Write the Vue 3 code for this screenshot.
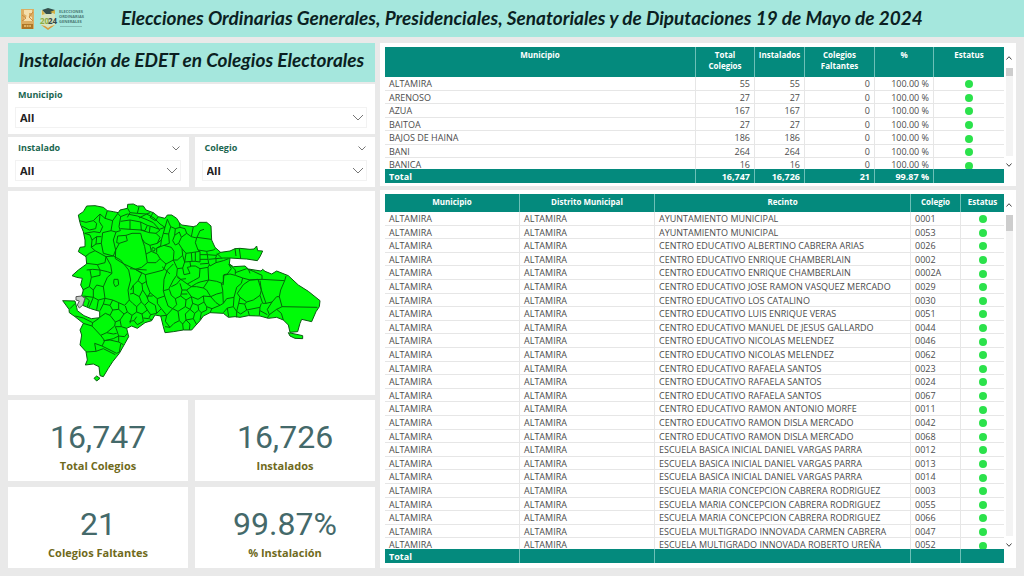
<script setup>
const municipios = [
  ['ALTAMIRA', '55', '55'],
  ['ARENOSO', '27', '27'],
  ['AZUA', '167', '167'],
  ['BAITOA', '27', '27'],
  ['BAJOS DE HAINA', '186', '186'],
  ['BANI', '264', '264'],
  ['BANICA', '16', '16'],
]

const recintos = [
  ['AYUNTAMIENTO MUNICIPAL', '0001'],
  ['AYUNTAMIENTO MUNICIPAL', '0053'],
  ['CENTRO EDUCATIVO ALBERTINO CABRERA ARIAS', '0026'],
  ['CENTRO EDUCATIVO ENRIQUE CHAMBERLAIN', '0002'],
  ['CENTRO EDUCATIVO ENRIQUE CHAMBERLAIN', '0002A'],
  ['CENTRO EDUCATIVO JOSE RAMON VASQUEZ MERCADO', '0029'],
  ['CENTRO EDUCATIVO LOS CATALINO', '0030'],
  ['CENTRO EDUCATIVO LUIS ENRIQUE VERAS', '0051'],
  ['CENTRO EDUCATIVO MANUEL DE JESUS GALLARDO', '0044'],
  ['CENTRO EDUCATIVO NICOLAS MELENDEZ', '0046'],
  ['CENTRO EDUCATIVO NICOLAS MELENDEZ', '0062'],
  ['CENTRO EDUCATIVO RAFAELA SANTOS', '0023'],
  ['CENTRO EDUCATIVO RAFAELA SANTOS', '0024'],
  ['CENTRO EDUCATIVO RAFAELA SANTOS', '0067'],
  ['CENTRO EDUCATIVO RAMON ANTONIO MORFE', '0011'],
  ['CENTRO EDUCATIVO RAMON DISLA MERCADO', '0042'],
  ['CENTRO EDUCATIVO RAMON DISLA MERCADO', '0068'],
  ['ESCUELA BASICA INICIAL DANIEL VARGAS PARRA', '0012'],
  ['ESCUELA BASICA INICIAL DANIEL VARGAS PARRA', '0013'],
  ['ESCUELA BASICA INICIAL DANIEL VARGAS PARRA', '0014'],
  ['ESCUELA MARIA CONCEPCION CABRERA RODRIGUEZ', '0003'],
  ['ESCUELA MARIA CONCEPCION CABRERA RODRIGUEZ', '0055'],
  ['ESCUELA MARIA CONCEPCION CABRERA RODRIGUEZ', '0066'],
  ['ESCUELA MULTIGRADO INNOVADA CARMEN CABRERA', '0047'],
  ['ESCUELA MULTIGRADO INNOVADA ROBERTO UREÑA', '0052'],
]

const cards = [
  ['16,747', 'Total Colegios'],
  ['16,726', 'Instalados'],
  ['21', 'Colegios Faltantes'],
  ['99.87%', '% Instalación'],
]

const slicers = [
  { id: 'municipio', label: 'Municipio', wide: true },
  { id: 'instalado', label: 'Instalado' },
  { id: 'colegio', label: 'Colegio' },
]

// Municipal boundaries inside the country outline
const borders = [
  'M88 92L108 97 130 92 140 100 137 116 118 120 95 108',
  'M172 62L165 85 150 72 148 95 158 110 150 128 132 125 104 130',
  'M165 85L188 92 205 68M188 92L183 122 158 128M205 72L212 80 207 110 211 122 198 126 183 122',
  'M212 80L232 72 262 78 288 88 310 98 328 118 345 112 352 88',
  'M233 55L240 68 262 70 267 50M262 70L290 72 300 68M240 68L232 82M267 84L290 72 312 84 330 102 345 112',
  'M212 94L240 90 272 96 274 120 240 118 211 116M240 90L240 118M272 96L292 106 285 122 274 120M292 106L312 112 328 118',
  'M158 128L154 160 160 190 190 198 197 180 190 150 198 126',
  'M190 198L168 200 135 182 118 190 106 200M168 200L165 218 142 224 110 220M135 182L124 172 126 150 120 135 104 130',
  'M126 150L140 140 154 140M124 172L138 162 154 160M140 140L138 162',
  'M200 158L203 138 228 136 232 152 208 160ZM228 136L246 130 272 130 276 146 284 170 288 192 292 218 275 232 256 238 222 222 196 206 197 180 208 160',
  'M190 198L212 210 236 240 242 270 234 300 238 330 224 346 206 338 188 330 165 325 160 290 172 262 186 250 182 225 168 200',
  'M192 268L204 268 206 284 196 290 191 280Z',
  'M142 224L150 240 172 245 186 250M110 240L128 238 150 240M120 240L124 262 118 290 98 300M150 240L150 256 124 262M160 290L140 285 130 300 118 290M130 300L130 322 100 318M165 325L145 330 130 322',
  'M272 120L298 128 318 130 330 142 322 160 300 166 284 158 276 146M298 128L300 110M318 130L330 120',
  'M300 166L304 184 288 192M304 184L322 192 330 206 318 218 292 218M308 172L316 176 312 184 305 178Z',
  'M322 160L334 150 332 168 320 174 320 188M320 174L342 166 364 172 372 184 370 210 348 222 330 206',
  'M348 222L340 240 318 246 286 254 256 238 275 250 264 272 250 286 242 300',
  'M370 210L382 236 380 256 370 270 356 298 340 302 344 318 322 326 300 308 290 282 286 254M370 222L352 240 342 268 340 302',
  'M345 112L340 130 334 150M340 130L356 132 362 110 376 116 390 112 388 98M356 132L358 160 342 166M362 110L352 88',
  'M388 126L394 142 386 160 376 165 368 152 374 136ZM376 116L374 136M394 142L410 130 424 140 430 110M410 130L405 116 390 112',
  'M386 160L396 176 398 196 382 210 370 210M396 176L408 190 404 216 398 196M408 190L424 188 436 186 450 184M424 188L426 214 404 216M436 186L436 214 426 214M450 184L450 216 436 214',
  'M424 140L440 144 436 158 444 180 450 184M440 144L450 122 462 118M440 142L484 148M444 180L470 184 490 180 496 176',
  'M450 194L472 194 474 208 450 208M470 184L472 194M472 194L498 196 512 187M474 208L476 220 450 222M476 208L496 206 500 196M496 206L520 204 540 204',
  'M498 218L520 212 536 206M498 206L498 218 480 228 476 220',
  'M382 236L398 234 404 216M398 234L402 254 420 250 412 232 422 230 420 216M420 228L436 228 450 236 448 262 430 272 412 282 398 272 382 262',
  'M380 256L392 268 380 282 364 290M392 268L408 266M412 282L424 290 440 280 450 276M450 236L474 232 476 270 450 276',
  'M474 232L478 224M476 270L500 274 516 280 520 276 522 254 532 252 544 236 536 222',
  'M514 280L520 284 520 256 540 252 556 256 578 264 574 280 560 292 552 322 530 326 520 340 518 300Z',
  'M538 222L556 240 556 254M556 248L590 236 610 244 636 256 636 268 600 270 578 264M595 237L600 250',
  'M600 270L624 268 634 300 630 316 610 330 590 336 570 322 562 310 580 284Z',
  'M636 268L704 272 708 258M704 272L692 300 688 320 696 350M630 272L634 300 648 340 638 340 630 316M648 340L666 336 680 320 688 320',
  'M696 350L802 352M696 350L680 358 658 374 652 384M658 374L652 358 666 336M680 358L694 370 700 390',
  'M570 322L566 340 584 342 590 336M566 340L560 364 572 372 590 360 584 342M590 360L630 352 634 340M630 352L628 376M594 362L598 376',
  'M552 322L550 350 560 364M550 350L532 354 520 368M532 354L536 380M560 364L560 382M630 362L652 374',
  'M476 270L460 294 440 290 424 290 410 300 424 320 444 328 460 318 482 320 470 300 460 294M482 320L500 312 516 308M482 320L498 338 510 346 520 340',
  'M510 346L486 356 470 350 462 336 460 318M462 336L444 346 428 340 424 320M444 346L446 360 454 368 470 360 470 350',
  'M486 356L480 368M446 360L434 370 430 386 440 404M454 368L450 390M434 370L420 358 428 340M420 358L406 372 408 390 430 386M408 390L398 402 400 420M408 390L420 402 418 420',
  'M390 280L396 300 392 318 408 330 406 350 420 358M408 330L424 320M396 300L410 300M392 318L376 326 364 316 358 298',
  'M376 326L380 344 368 356 384 364 406 350M368 356L354 348 344 318M384 364L388 392 372 400 360 412 345 410M388 392L398 402',
  'M332 378L350 376 368 356M350 376L346 394 360 412M350 376L334 356 322 340 322 326M334 356L320 370',
  'M264 272L276 282 278 300 290 318 308 318M276 282L290 274M250 286L250 310 268 320 278 300M268 320L274 336 260 350 248 340 238 330M290 318L296 334 284 346 274 336',
  'M296 334L316 346 320 370 302 374 292 360 284 346M292 360L276 372 260 366 260 350M276 372L280 394M302 374L296 386 280 384M260 366L246 376 240 400M246 376L232 366 226 348',
  'M238 394L252 392 262 404 280 394M252 392L260 380M298 386L306 390',
  'M188 330L180 346 188 360 180 376 166 370 149 382M180 346L160 342 150 362M165 325L160 342M145 330L140 359M130 322L120 346 116 353M105 320L118 332 112 350M188 360L206 358 222 372 232 366M206 338L206 358',
  'M147 385L128 398 126 408 100 400M128 398L100 384 76 378M180 376L196 396 194 408 170 428 152 436 126 408M196 396L210 390 222 372M210 390L214 410 230 415M214 410L196 410',
  'M152 436L164 452 190 446 206 438 200 420 196 410M170 428L190 432 200 430M206 438L224 440 232 430M206 438L206 456 220 464M164 452L156 468 200 490 208 486 212 462',
  'M160 452L180 450 206 456M156 468L134 460 138 484 108 486M138 484L160 476 196 494M76 340L60 356M150 72L130 92M310 68L300 82 316 92 325 80',
  'M240 236L262 238 290 240M336 230L360 252M250 310L240 312M412 312L394 312M300 308L292 324M500 190L515 204M568 176L572 206M555 176L558 198',
]
</script>

<template>
  <div class="page">
    <header class="banner">
      <div class="logos">
        <svg class="logo" viewBox="0 0 66 24" role="img" aria-label="Elecciones Ordinarias Generales 2024">
          <rect x="1" y="2" width="13" height="20" fill="#dcae62" />
          <path d="M4 3h8v3H9v3l3 1v4H4v-3l3-2-3-2z" fill="#f5dfac" />
          <path d="M2 8l4 3-4 3M13 5l-4 5 4 4" stroke="#c98a3d" fill="none" />
          <rect x="2" y="17" width="11" height="5" fill="#ad7626" />
          <path d="M4 19h7" stroke="#f0c978" stroke-width="1.5" stroke-dasharray="2 .6" />
          <path d="M21 3h14v15l-7 5-7-5z" fill="#d6e4c1" />
          <path d="M22 3l6-2 7 2-4 4h-5z" fill="#34504b" />
          <path d="M30 5l5-2v4zM22 3l3 4-3 1z" fill="#d4b044" />
          <path d="M21 18l7 5 7-5-4 1-3 2-3-2z" fill="#d49b3f" />
          <text x="20" y="17" class="logo-year" fill="#8fad43">20</text>
          <text x="28" y="17" class="logo-year" fill="#37484a">24</text>
          <text x="39" y="6" class="logo-name">ELECCIONES</text>
          <text x="39" y="11" class="logo-name">ORDINARIAS</text>
          <text x="39" y="16" class="logo-name">GENERALES</text>
          <path d="M40 19.500h22" stroke="#74aba3" stroke-width=".7" />
        </svg>
      </div>
      <h1>Elecciones Ordinarias Generales, Presidenciales, Senatoriales y de Diputaciones 19 de Mayo de 2024</h1>
    </header>

    <main class="board">
      <section class="side">
        <h2 class="side-title">Instalación de EDET en Colegios Electorales</h2>

        <div class="slicers">
          <div v-for="s in slicers" :key="s.id" class="panel slicer" :class="{ wide: s.wide }">
            <div class="slicer-head">
              <label :for="s.id">{{ s.label }}</label>
              <button v-if="!s.wide" type="button" class="menu" :aria-label="'Opciones de ' + s.label">
                <svg viewBox="0 0 8 5"><path d="M.5.5L4 4 7.500.5" /></svg>
              </button>
            </div>
            <div class="picker">
              <select :id="s.id"><option>All</option></select>
              <svg viewBox="0 0 12 7"><path d="M1 1l5 5 5-5" /></svg>
            </div>
          </div>
        </div>

        <div class="panel map">
          <svg viewBox="-126 3 1101 612" role="img" aria-label="Mapa de municipios">
            <path
              class="land"
              d="M85 75L100 65 110 48 135 47 160 52 172 62 190 65 205 68 210 60 232 55 233 43 250 42 262 48 280 48 288 60 310 68 325 80 345 85 352 75 365 75 380 85 388 98 395 105 430 110 440 107 448 97 470 97 483 108 485 150 495 172 512 187 540 183 555 176 570 175 600 178 612 177 620 168 623 182 638 183 630 200 622 212 590 207 570 206 540 204 538 222 550 230 585 228 595 237 633 243 638 238 645 244 665 252 680 243 705 253 715 257 745 285 775 304 810 332 808 350 798 365 785 395 755 388 750 400 743 425 720 427 715 405 700 390 680 382 655 385 630 378 595 377 570 382 555 380 535 382 520 370 480 368 460 378 450 392 438 405 425 420 400 420 370 425 345 428 340 410 332 378 315 375 305 392 285 398 262 415 245 408 230 415 236 440 225 460 208 490 188 515 175 535 160 560 150 557 147 530 130 522 106 525 112 510 108 485 90 465 95 435 90 420 100 400 75 380 58 368 57 358 38 332 75 333 80 352 82 362 102 377 124 386 149 383 149 364 122 356 110 351 98 346 105 325 95 318 100 300 92 285 97 265 80 262 66 257 85 240 110 222 108 200 85 185 90 172 105 170 105 150 100 125 92 105 88 90Z"
            />
            <path class="land" d="M715 428L735 432 758 437 758 446 735 445 720 438ZM140 558L150 565 140 573 132 565Z" />
            <path class="pending" d="M78 320L95 318 105 325 98 346 88 354 82 345 88 333 78 330Z" />
            <path v-for="(d, i) in borders" :key="i" class="border" :d="d" />
          </svg>
        </div>

        <div class="cards">
          <div v-for="c in cards" :key="c[1]" class="panel card">
            <strong>{{ c[0] }}</strong>
            <span>{{ c[1] }}</span>
          </div>
        </div>
      </section>

      <section class="tables">
        <div class="panel frame">
          <table class="by-town">
            <thead>
              <tr>
                <th>Municipio</th><th>Total Colegios</th><th>Instalados</th>
                <th>Colegios Faltantes</th><th>%</th><th>Estatus</th>
              </tr>
            </thead>
            <tbody>
              <tr v-for="m in municipios" :key="m[0]">
                <td>{{ m[0] }}</td><td>{{ m[1] }}</td><td>{{ m[2] }}</td><td>0</td><td>100.00 %</td>
                <td class="state"><i class="dot"></i></td>
              </tr>
            </tbody>
            <tfoot>
              <tr><td>Total</td><td>16,747</td><td>16,726</td><td>21</td><td>99.87 %</td><td></td></tr>
            </tfoot>
          </table>
          <div class="scroll">
            <button type="button" aria-label="Subir"><svg viewBox="0 0 6 4"><path d="M.5 3.500L3 .7l2.500 2.800" /></svg></button>
            <div class="track"><div class="thumb"></div></div>
            <button type="button" aria-label="Bajar"><svg viewBox="0 0 6 4"><path d="M.5.5L3 3.300 5.500.5" /></svg></button>
          </div>
        </div>

        <div class="panel frame tall">
          <table class="by-site">
            <thead>
              <tr><th>Municipio</th><th>Distrito Municipal</th><th>Recinto</th><th>Colegio</th><th>Estatus</th></tr>
            </thead>
            <tbody>
              <tr v-for="r in recintos" :key="r[1]">
                <td>ALTAMIRA</td><td>ALTAMIRA</td><td>{{ r[0] }}</td><td>{{ r[1] }}</td>
                <td class="state"><i class="dot"></i></td>
              </tr>
            </tbody>
            <tfoot>
              <tr><td>Total</td><td></td><td></td><td></td><td></td></tr>
            </tfoot>
          </table>
          <div class="scroll">
            <button type="button" aria-label="Subir"><svg viewBox="0 0 6 4"><path d="M.5 3.500L3 .7l2.500 2.800" /></svg></button>
            <div class="track"><div class="thumb"></div></div>
            <button type="button" aria-label="Bajar"><svg viewBox="0 0 6 4"><path d="M.5.5L3 3.300 5.500.5" /></svg></button>
          </div>
        </div>
      </section>
    </main>
  </div>
</template>

<style>
body {
  margin: 0;
  background: #e9e9e9;
}
</style>

<style scoped>
* {
  box-sizing: border-box;
}
.page {
  min-height: 100vh;
  display: flex;
  flex-direction: column;
  font-family: "Open Sans", "Noto Sans", sans-serif;
  color: #4c4c4c;
}
.banner {
  display: grid;
  grid-template-columns: 101px 1fr;
  align-items: center;
  height: 37px;
  padding-left: 20px;
  background: #a5e7dd;
}
.logos {
  display: flex;
}
.logo {
  width: 66px;
  height: 24px;
}
.logo-year {
  font: bold 8px "Open Sans", sans-serif;
}
.logo-name {
  font: bold 4px "Open Sans", sans-serif;
  fill: #4b7a75;
}
h1,
h2 {
  margin: 0;
  font-family: Lato, sans-serif;
  font-weight: 700;
  font-style: italic;
  color: #0b1f22;
  white-space: nowrap;
}
h1 {
  padding-bottom: 2px;
  font-size: 19px;
  line-height: 24px;
}
.board {
  flex: 1;
  display: grid;
  grid-template-columns: 367fr 636fr;
  gap: 5px;
  padding: 6px 8px 8px;
}
.side,
.tables {
  display: flex;
  flex-direction: column;
  min-width: 0;
}
.tables {
  gap: 4px;
}
.panel {
  background: #fff;
}
.side-title {
  padding: 5px 0 10px;
  background: #a5e7dd;
  font-size: 19px;
  line-height: 24px;
  text-align: center;
}
.slicers {
  display: grid;
  grid-template-columns: 1fr 1fr;
  gap: 3px 6px;
  margin-top: 2px;
}
.slicer {
  padding: 4px 8px 6px 7px;
}
.wide {
  grid-column: 1 / -1;
}
.slicer-head {
  display: flex;
  justify-content: space-between;
  align-items: center;
  padding-left: 3px;
  font-size: 9px;
  line-height: 14px;
  font-weight: 700;
  color: #1b6650;
}
.menu {
  display: flex;
  padding: 0 1px;
  border: 0;
  background: none;
}
.menu svg {
  width: 8px;
  height: 5px;
}
.slicer path,
.scroll path {
  fill: none;
  stroke: #777;
}
.picker {
  position: relative;
  margin-top: 5px;
}
.picker select {
  display: block;
  width: 100%;
  height: 21px;
  padding: 0 4px;
  border: 1px solid #f2f2f2;
  border-radius: 0;
  background: #fff;
  appearance: none;
  font: 700 11px "Open Sans", sans-serif;
  color: #222;
}
.picker svg {
  position: absolute;
  right: 3px;
  top: 7px;
  width: 12px;
  height: 7px;
  pointer-events: none;
}
.map {
  flex: 1;
  display: flex;
  margin: 4px 0 5px;
}
.map svg {
  width: 100%;
  max-height: 204px;
}
.land {
  fill: #00fb08;
  stroke: #0b5a12;
  stroke-width: 3;
  stroke-linejoin: round;
}
.pending {
  fill: #c4c8c4;
  stroke: #555;
  stroke-width: 3;
}
.border {
  fill: none;
  stroke: #04670b;
  stroke-width: 3;
  stroke-linejoin: round;
}
.cards {
  display: grid;
  grid-template-columns: 1fr 1fr;
  gap: 6px 7px;
}
.card {
  display: flex;
  flex-direction: column;
  align-items: center;
  padding: 18px 0 6px;
}
.card strong {
  font: 400 32px/38px Roboto, sans-serif;
  color: #44696a;
}
.card span {
  font-size: 11px;
  line-height: 19px;
  font-weight: 700;
  color: #6f6a1c;
}
.frame {
  display: flex;
  padding: 4px 2px 3px 5px;
}
.tall {
  flex: 1;
  padding-bottom: 5px;
}
table {
  flex: 1;
  display: flex;
  flex-direction: column;
  font-size: 9px;
  line-height: 10px;
}
tbody {
  flex: 1;
  display: grid;
  grid-auto-rows: 1fr;
  margin-bottom: -3px;
}
.by-town tbody {
  min-height: 95px;
}
thead,
tfoot {
  display: block;
  background: #048a7d;
  color: #fff;
  font-weight: 700;
}
tfoot {
  position: relative;
}
tr {
  display: grid;
}
.by-town tr {
  grid-template-columns: 311fr 59fr 50fr 70fr 59fr 70fr;
}
.by-site tr {
  grid-template-columns: 135fr 135fr 256fr 50fr 43fr;
}
th,
td {
  display: block;
  min-width: 0;
  padding: 2px 4px 0;
  border-right: 1px solid #e6e6e6;
  white-space: nowrap;
}
th {
  padding: 2px 2px 0;
  border-color: #6cc0b7;
  font-size: 8px;
  line-height: 11px;
  white-space: normal;
}
tfoot td {
  height: 14px;
  padding-top: 3px;
  border-color: #6cc0b7;
}
th:last-child,
td:last-child {
  border-right: 0;
}
tbody td {
  border-bottom: 1px solid #e6e6e6;
}
.by-town th {
  height: 30px;
}
.by-site th {
  height: 18px;
}
.by-town td:not(:first-child) {
  text-align: right;
}
td.state {
  display: flex;
  align-items: center;
  justify-content: center;
}
.dot {
  width: 8px;
  height: 8px;
  border-radius: 50%;
  background: #2be24b;
}
.scroll {
  width: 10px;
  display: flex;
  flex-direction: column;
  align-items: center;
}
.scroll button {
  display: flex;
  align-items: center;
  justify-content: center;
  width: 10px;
  height: 21px;
  padding: 0;
  border: 0;
  background: none;
}
.scroll button:last-child {
  height: 18px;
  margin-bottom: 9px;
}
.scroll svg {
  width: 6px;
  height: 4px;
}
.scroll path {
  stroke: #444;
}
.track {
  flex: 1;
  width: 7px;
  background: #f3f3f3;
}
.thumb {
  height: 8px;
  background: #cdcdcd;
}
.tall .thumb {
  height: 16px;
}
</style>
